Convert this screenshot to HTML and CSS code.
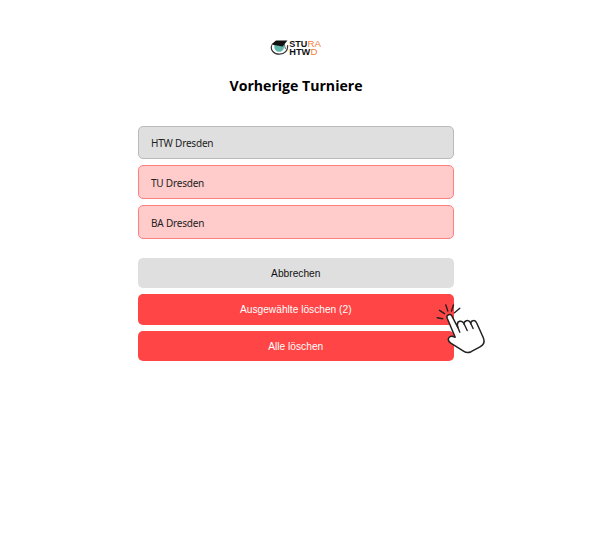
FILE: index.html
```html
<!DOCTYPE html>
<html lang="de">
<head>
<meta charset="utf-8">
<title>Vorherige Turniere</title>
<link rel="stylesheet" href="styles.css">
</head>
<body>
<main class="page">
  <svg class="logo" viewBox="0 0 52 20" role="img" aria-label="STURA HTWD">
    <path d="M1.800 7.200C-.2 12 4 16.200 9.500 16.200c5 0 8.800-3.800 8-9" fill="#fff" stroke="#333" stroke-width="1.200"/>
    <path d="M4.500 6.500l9-.5c2 4-1 7.800-4.500 7.800-3.500 0-5.500-3.600-4.500-7.300z" fill="#60b5a9"/>
    <path d="M1.200 6.600L6 2.400h11.500L12.600 8.600z" fill="#111"/>
    <path d="M14 5l1.500 6" stroke="#222" stroke-width=".7"/>
    <text class="logo-text" x="19.300" y="9.400" textLength="18" lengthAdjust="spacingAndGlyphs">STU</text>
    <text class="logo-text logo-accent" x="37.500" y="9.400" textLength="13.500" lengthAdjust="spacingAndGlyphs">RA</text>
    <text class="logo-text" x="19.300" y="16.800" textLength="21" lengthAdjust="spacingAndGlyphs">HTW</text>
    <text class="logo-text logo-accent" x="40.500" y="16.800" textLength="7" lengthAdjust="spacingAndGlyphs">D</text>
  </svg>
  <h1 class="title"><svg width="134" height="22"><text x="0.500" y="15.500" textLength="133" lengthAdjust="spacingAndGlyphs">Vorherige Turniere</text></svg></h1>
  <ul class="list">
    <li class="item">HTW Dresden</li>
    <li class="item selected">TU Dresden</li>
    <li class="item selected">BA Dresden</li>
  </ul>
  <div class="actions">
    <button class="btn">Abbrechen</button>
    <button class="btn danger">Ausgewählte löschen (2)</button>
    <button class="btn danger">Alle löschen</button>
    <svg class="pointer" viewBox="0 0 50 54" aria-hidden="true">
      <path class="hand" d="M19.200 37.200L11.200 18.200c-1.300-3.400 3.300-5.200 4.800-2.100L21.800 27.500 21.400 25c-.4-3.900 4.700-5.300 6.300-1.700l.4.900c-.4-3.900 4.800-5 6.300-1.400l.4.900c-.2-3.600 4.500-4.300 5.900-.7l6.500 14.500c1.800 4.300.8 7.300-3.200 9.300l-8.900 4.900c-2.500 1.200-4.900 1.200-7.200-.4L14.800 43.200c-2.300-1.700-3-3.900-1.900-5.600 1.100-1.800 4-1.500 6.300-.4z"/>
      <path class="stroke" d="M21.500 26.500l2.300 5.700M28.400 24.500l2.800 6M34.900 23.700l2.200 4.800"/>
      <path class="stroke" d="M1.200 17.700l5.600 1M3.500 10.300l5 3.400M9.800 5l2 6M17.500 5l-2 6M23.800 8.300l-5.300 4.400"/>
    </svg>
  </div>
</main>
</body>
</html>
```

FILE: styles.css
```css
body { margin: 0; background: #fff; font-family: "Noto Sans", sans-serif; color: #222; }
.page { width: 316.500px; margin-left: 137.500px; padding-top: 38px; display: flex; flex-direction: column; }
.logo { width: 52px; height: 20px; align-self: center; }
.logo-text { font: 700 9.200px/1 "Liberation Sans", sans-serif; fill: #111; }
.logo-accent { fill: #f28038; font-weight: 400; }
.title { margin: 17px 0 0; height: 22px; align-self: center; font: 700 14.800px "Open Sans", sans-serif; }
.title svg { display: block; overflow: visible; fill: #000; }
.list { list-style: none; margin: 28.500px 0 0; padding: 0; display: flex; flex-direction: column; gap: 6px; }
.item { box-sizing: border-box; height: 33.800px; border: 1px solid #bababa; border-radius: 5px; background: #dfdfdf; padding: 2px 12.500px 0; display: flex; align-items: center; font-size: 10px; letter-spacing: -0.200px; }
.selected { background: #ffcbcb; border-color: #ff8080; }
.actions { position: relative; margin-top: 19px; display: flex; flex-direction: column; gap: 6.300px; }
.btn { height: 30.300px; border: 0; border-radius: 5px; padding: 0; background: #dfdfdf; color: #111; font: 10.200px "Liberation Sans", sans-serif; }
.danger { background: #ff4545; color: #fff; }
.pointer { position: absolute; left: 298px; top: 42px; width: 50px; height: 54px; }
.hand { fill: #fff; stroke: #222; stroke-width: 1.500; stroke-linejoin: round; }
.stroke { fill: none; stroke: #222; stroke-width: 1.400; stroke-linecap: round; }
```
